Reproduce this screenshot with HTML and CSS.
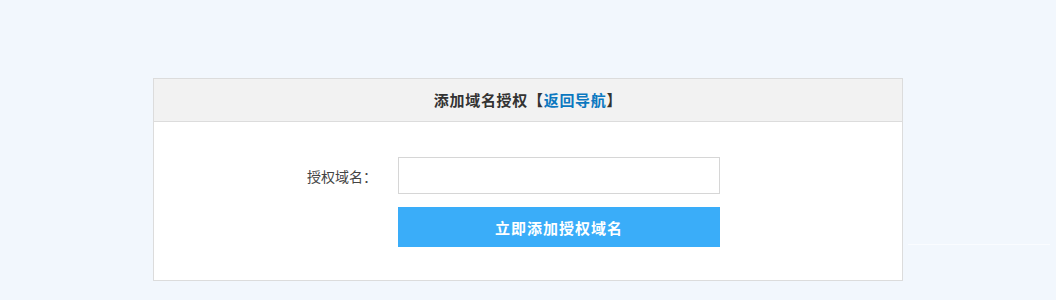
FILE: index.html
```html
<!DOCTYPE html>
<html lang="zh-CN">
<head>
  <meta charset="UTF-8" />
  <title>添加域名授权</title>
  <link rel="stylesheet" href="styles.css">
</head>
<body>

  <div class="panel">
    <div class="panel-head">
      添加域名授权【<a href="#">返回导航</a>】
    </div>
    <div class="panel-body">
      <div class="form-row">
        <label class="form-label">授权域名：</label>
        <input class="form-input" type="text">
      </div>
      <div class="form-row">
        <span class="form-label"></span>
        <button class="form-btn">立即添加授权域名</button>
      </div>
    </div>
  </div>

  <div class="edge-line"></div>

</body>
</html>
```

FILE: styles.css
```css
body {
  margin: 0;
  background: #f2f7fd;
  font-family: "Noto Sans CJK SC", "Liberation Sans", sans-serif;
  font-size: 14px;
  color: #333;
}

.panel {
  width: 748px;
  margin: 78px auto 0;
  background: #fff;
  border: 1px solid #dcdcdc;
}

.panel-head {
  height: 42px;
  line-height: 42px;
  text-align: center;
  background: #f2f2f2;
  border-bottom: 1px solid #dcdcdc;
  font-size: 15px;
  letter-spacing: 0.7px;
  font-weight: bold;
  color: #333;
}

.panel-head a {
  color: #0b78c0;
  text-decoration: none;
}

.panel-body {
  padding: 35px 0 33px;
}

.form-row {
  display: flex;
  align-items: center;
  margin-bottom: 13px;
}

.form-row:last-child {
  margin-bottom: 0;
}

.form-label {
  width: 223px;
  text-align: right;
  margin-right: 21px;
  color: #444;
}

.form-input {
  box-sizing: border-box;
  width: 322px;
  height: 37px;
  border: 1px solid #d6d6d6;
  padding: 0 8px;
  font-size: 14px;
  outline: none;
}

.form-btn {
  width: 322px;
  height: 40px;
  border: none;
  background: #3aadf9;
  color: #fff;
  font-family: inherit;
  font-size: 15px;
  letter-spacing: 1px;
  font-weight: bold;
  cursor: pointer;
}

.edge-line {
  position: absolute;
  left: 908px;
  top: 244px;
  width: 142px;
  height: 1px;
  background: #fafcff;
}
```
